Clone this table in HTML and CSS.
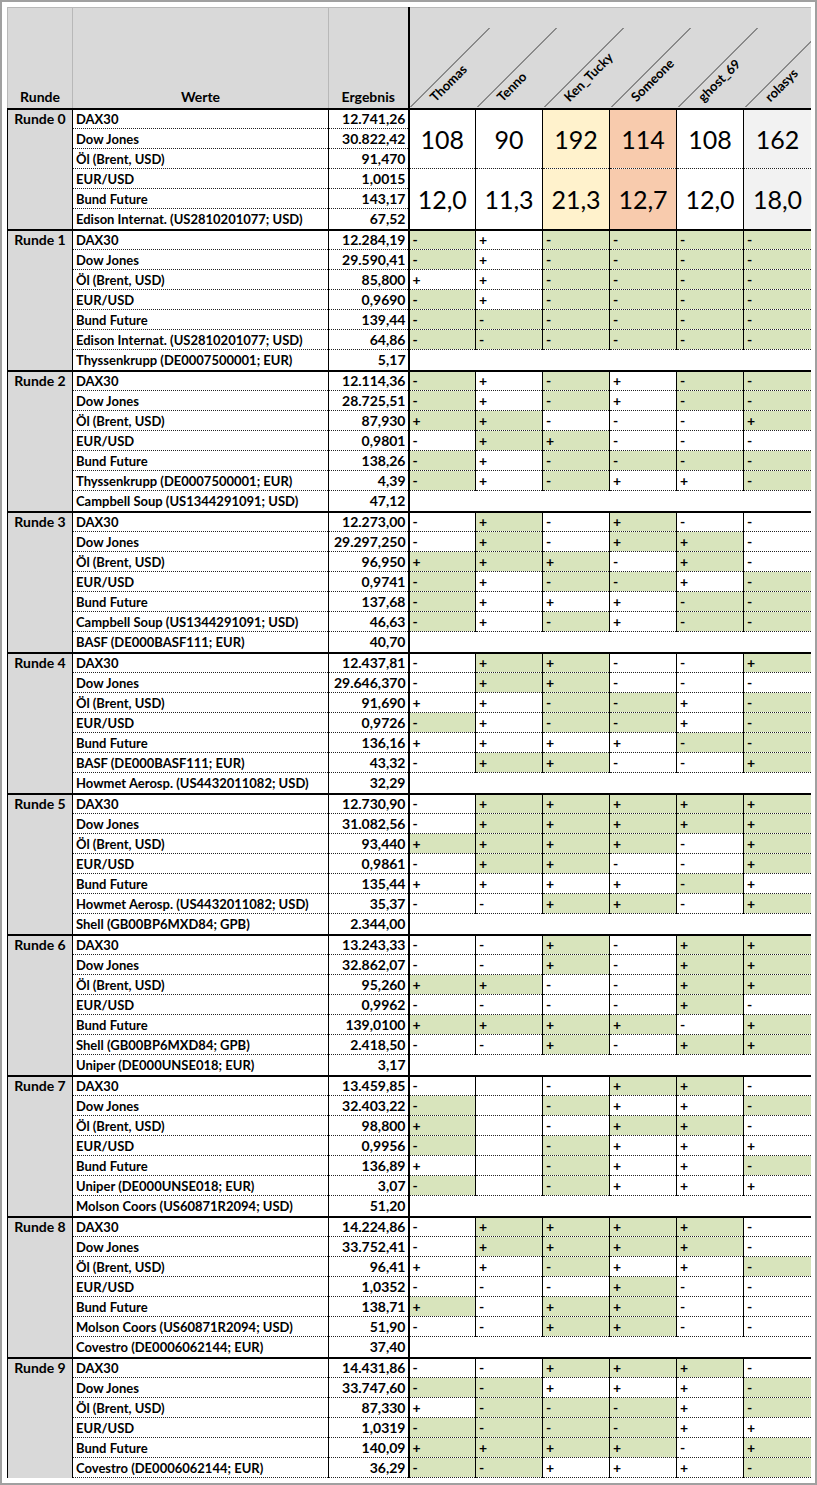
FILE: index.html
```html
<!DOCTYPE html>
<html lang="de">
<head>
<meta charset="utf-8">
<title>Börsenspiel</title>
<link rel="stylesheet" href="styles.css">
</head>
<body>
<div class="frame">
<div class="clip">
<table class="sheet">
<colgroup>
<col class="c-runde"><col class="c-werte"><col class="c-erg">
<col class="c-p"><col class="c-p"><col class="c-p"><col class="c-p"><col class="c-p"><col class="c-plast">
</colgroup>
<tr class="head">
<th class="h1">Runde</th><th class="h2">Werte</th><th class="h3">Ergebnis</th>
<th class="hp" colspan="6"><div class="names">
<svg class="diag" width="402" height="99" viewBox="0 0 402 99">
<path d="M0.5 99 L79.5 20 M67.5 99 L146.5 20 M134.5 99 L213.5 20 M201.5 99 L280.5 20 M268.5 99 L347.5 20 M335.5 99 L414.5 20" stroke="#3a3a3a" stroke-width="1" fill="none"/>
</svg>
<span class="nm n1">Thomas</span><span class="nm n2">Tenno</span><span class="nm n3">Ken_Tucky</span><span class="nm n4">Someone</span><span class="nm n5">ghost_69</span><span class="nm n6">rolasys</span>
</div></th>
</tr>

<tr><td class="r" rowspan="6">Runde 0</td><td class="w">DAX30</td><td class="e">12.741,26</td><td class="big" rowspan="3">108</td><td class="big" rowspan="3">90</td><td class="big y" rowspan="3">192</td><td class="big o" rowspan="3">114</td><td class="big" rowspan="3">108</td><td class="big l" rowspan="3">162</td></tr>
<tr><td class="w">Dow Jones</td><td class="e">30.822,42</td></tr>
<tr><td class="w">Öl (Brent, USD)</td><td class="e">91,470</td></tr>
<tr><td class="w">EUR/USD</td><td class="e">1,0015</td><td class="big bb" rowspan="3">12,0</td><td class="big bb" rowspan="3">11,3</td><td class="big bb y" rowspan="3">21,3</td><td class="big bb o" rowspan="3">12,7</td><td class="big bb" rowspan="3">12,0</td><td class="big bb l" rowspan="3">18,0</td></tr>
<tr><td class="w">Bund Future</td><td class="e">143,17</td></tr>
<tr class="end"><td class="w">Edison Internat. (US2810201077; USD)</td><td class="e">67,52</td></tr>

<tr><td class="r" rowspan="7">Runde 1</td><td class="w">DAX30</td><td class="e">12.284,19</td><td class="g">-</td><td>+</td><td class="g">-</td><td class="g">-</td><td class="g">-</td><td class="g">-</td></tr>
<tr><td class="w">Dow Jones</td><td class="e">29.590,41</td><td class="g">-</td><td>+</td><td class="g">-</td><td class="g">-</td><td class="g">-</td><td class="g">-</td></tr>
<tr><td class="w">Öl (Brent, USD)</td><td class="e">85,800</td><td>+</td><td>+</td><td class="g">-</td><td class="g">-</td><td class="g">-</td><td class="g">-</td></tr>
<tr><td class="w">EUR/USD</td><td class="e">0,9690</td><td class="g">-</td><td>+</td><td class="g">-</td><td class="g">-</td><td class="g">-</td><td class="g">-</td></tr>
<tr><td class="w">Bund Future</td><td class="e">139,44</td><td class="g">-</td><td class="g">-</td><td class="g">-</td><td class="g">-</td><td class="g">-</td><td class="g">-</td></tr>
<tr><td class="w">Edison Internat. (US2810201077; USD)</td><td class="e">64,86</td><td class="g">-</td><td class="g">-</td><td class="g">-</td><td class="g">-</td><td class="g">-</td><td class="g">-</td></tr>
<tr class="end"><td class="w">Thyssenkrupp (DE0007500001; EUR)</td><td class="e">5,17</td><td class="x" colspan="6"></td></tr>

<tr><td class="r" rowspan="7">Runde 2</td><td class="w">DAX30</td><td class="e">12.114,36</td><td class="g">-</td><td>+</td><td class="g">-</td><td>+</td><td class="g">-</td><td class="g">-</td></tr>
<tr><td class="w">Dow Jones</td><td class="e">28.725,51</td><td class="g">-</td><td>+</td><td class="g">-</td><td>+</td><td class="g">-</td><td class="g">-</td></tr>
<tr><td class="w">Öl (Brent, USD)</td><td class="e">87,930</td><td class="g">+</td><td class="g">+</td><td>-</td><td>-</td><td>-</td><td class="g">+</td></tr>
<tr><td class="w">EUR/USD</td><td class="e">0,9801</td><td>-</td><td class="g">+</td><td class="g">+</td><td>-</td><td>-</td><td>-</td></tr>
<tr><td class="w">Bund Future</td><td class="e">138,26</td><td class="g">-</td><td>+</td><td class="g">-</td><td class="g">-</td><td class="g">-</td><td class="g">-</td></tr>
<tr><td class="w">Thyssenkrupp (DE0007500001; EUR)</td><td class="e">4,39</td><td class="g">-</td><td>+</td><td class="g">-</td><td>+</td><td>+</td><td class="g">-</td></tr>
<tr class="end"><td class="w">Campbell Soup (US1344291091; USD)</td><td class="e">47,12</td><td class="x" colspan="6"></td></tr>

<tr><td class="r" rowspan="7">Runde 3</td><td class="w">DAX30</td><td class="e">12.273,00</td><td>-</td><td class="g">+</td><td>-</td><td class="g">+</td><td>-</td><td>-</td></tr>
<tr><td class="w">Dow Jones</td><td class="e">29.297,250</td><td>-</td><td class="g">+</td><td>-</td><td class="g">+</td><td class="g">+</td><td>-</td></tr>
<tr><td class="w">Öl (Brent, USD)</td><td class="e">96,950</td><td class="g">+</td><td class="g">+</td><td class="g">+</td><td>-</td><td class="g">+</td><td>-</td></tr>
<tr><td class="w">EUR/USD</td><td class="e">0,9741</td><td class="g">-</td><td>+</td><td class="g">-</td><td class="g">-</td><td>+</td><td class="g">-</td></tr>
<tr><td class="w">Bund Future</td><td class="e">137,68</td><td class="g">-</td><td>+</td><td>+</td><td>+</td><td class="g">-</td><td class="g">-</td></tr>
<tr><td class="w">Campbell Soup (US1344291091; USD)</td><td class="e">46,63</td><td class="g">-</td><td>+</td><td class="g">-</td><td>+</td><td class="g">-</td><td class="g">-</td></tr>
<tr class="end"><td class="w">BASF (DE000BASF111; EUR)</td><td class="e">40,70</td><td class="x" colspan="6"></td></tr>

<tr><td class="r" rowspan="7">Runde 4</td><td class="w">DAX30</td><td class="e">12.437,81</td><td>-</td><td class="g">+</td><td class="g">+</td><td>-</td><td>-</td><td class="g">+</td></tr>
<tr><td class="w">Dow Jones</td><td class="e">29.646,370</td><td>-</td><td class="g">+</td><td class="g">+</td><td>-</td><td>-</td><td>-</td></tr>
<tr><td class="w">Öl (Brent, USD)</td><td class="e">91,690</td><td>+</td><td>+</td><td class="g">-</td><td class="g">-</td><td>+</td><td class="g">-</td></tr>
<tr><td class="w">EUR/USD</td><td class="e">0,9726</td><td class="g">-</td><td>+</td><td class="g">-</td><td class="g">-</td><td>+</td><td class="g">-</td></tr>
<tr><td class="w">Bund Future</td><td class="e">136,16</td><td>+</td><td>+</td><td>+</td><td>+</td><td class="g">-</td><td class="g">-</td></tr>
<tr><td class="w">BASF (DE000BASF111; EUR)</td><td class="e">43,32</td><td>-</td><td class="g">+</td><td class="g">+</td><td>-</td><td>-</td><td class="g">+</td></tr>
<tr class="end"><td class="w">Howmet Aerosp. (US4432011082; USD)</td><td class="e">32,29</td><td class="x" colspan="6"></td></tr>

<tr><td class="r" rowspan="7">Runde 5</td><td class="w">DAX30</td><td class="e">12.730,90</td><td>-</td><td class="g">+</td><td class="g">+</td><td class="g">+</td><td class="g">+</td><td class="g">+</td></tr>
<tr><td class="w">Dow Jones</td><td class="e">31.082,56</td><td>-</td><td class="g">+</td><td class="g">+</td><td class="g">+</td><td class="g">+</td><td class="g">+</td></tr>
<tr><td class="w">Öl (Brent, USD)</td><td class="e">93,440</td><td class="g">+</td><td class="g">+</td><td class="g">+</td><td class="g">+</td><td>-</td><td class="g">+</td></tr>
<tr><td class="w">EUR/USD</td><td class="e">0,9861</td><td>-</td><td class="g">+</td><td class="g">+</td><td>-</td><td>-</td><td class="g">+</td></tr>
<tr><td class="w">Bund Future</td><td class="e">135,44</td><td>+</td><td>+</td><td>+</td><td>+</td><td class="g">-</td><td>+</td></tr>
<tr><td class="w">Howmet Aerosp. (US4432011082; USD)</td><td class="e">35,37</td><td>-</td><td>-</td><td class="g">+</td><td class="g">+</td><td>-</td><td class="g">+</td></tr>
<tr class="end"><td class="w">Shell (GB00BP6MXD84; GPB)</td><td class="e">2.344,00</td><td class="x" colspan="6"></td></tr>

<tr><td class="r" rowspan="7">Runde 6</td><td class="w">DAX30</td><td class="e">13.243,33</td><td>-</td><td>-</td><td class="g">+</td><td>-</td><td class="g">+</td><td class="g">+</td></tr>
<tr><td class="w">Dow Jones</td><td class="e">32.862,07</td><td>-</td><td>-</td><td class="g">+</td><td>-</td><td class="g">+</td><td class="g">+</td></tr>
<tr><td class="w">Öl (Brent, USD)</td><td class="e">95,260</td><td class="g">+</td><td class="g">+</td><td>-</td><td>-</td><td class="g">+</td><td class="g">+</td></tr>
<tr><td class="w">EUR/USD</td><td class="e">0,9962</td><td>-</td><td>-</td><td>-</td><td>-</td><td class="g">+</td><td>-</td></tr>
<tr><td class="w">Bund Future</td><td class="e">139,0100</td><td class="g">+</td><td class="g">+</td><td class="g">+</td><td class="g">+</td><td>-</td><td class="g">+</td></tr>
<tr><td class="w">Shell (GB00BP6MXD84; GPB)</td><td class="e">2.418,50</td><td>-</td><td>-</td><td class="g">+</td><td>-</td><td class="g">+</td><td class="g">+</td></tr>
<tr class="end"><td class="w">Uniper (DE000UNSE018; EUR)</td><td class="e">3,17</td><td class="x" colspan="6"></td></tr>

<tr><td class="r" rowspan="7">Runde 7</td><td class="w">DAX30</td><td class="e">13.459,85</td><td>-</td><td></td><td>-</td><td class="g">+</td><td class="g">+</td><td>-</td></tr>
<tr><td class="w">Dow Jones</td><td class="e">32.403,22</td><td class="g">-</td><td></td><td class="g">-</td><td>+</td><td>+</td><td class="g">-</td></tr>
<tr><td class="w">Öl (Brent, USD)</td><td class="e">98,800</td><td class="g">+</td><td></td><td>-</td><td class="g">+</td><td class="g">+</td><td>-</td></tr>
<tr><td class="w">EUR/USD</td><td class="e">0,9956</td><td class="g">-</td><td></td><td class="g">-</td><td>+</td><td>+</td><td>+</td></tr>
<tr><td class="w">Bund Future</td><td class="e">136,89</td><td>+</td><td></td><td class="g">-</td><td>+</td><td>+</td><td class="g">-</td></tr>
<tr><td class="w">Uniper (DE000UNSE018; EUR)</td><td class="e">3,07</td><td class="g">-</td><td></td><td class="g">-</td><td>+</td><td>+</td><td>+</td></tr>
<tr class="end"><td class="w">Molson Coors (US60871R2094; USD)</td><td class="e">51,20</td><td class="x" colspan="6"></td></tr>

<tr><td class="r" rowspan="7">Runde 8</td><td class="w">DAX30</td><td class="e">14.224,86</td><td>-</td><td class="g">+</td><td class="g">+</td><td class="g">+</td><td class="g">+</td><td>-</td></tr>
<tr><td class="w">Dow Jones</td><td class="e">33.752,41</td><td>-</td><td class="g">+</td><td class="g">+</td><td class="g">+</td><td class="g">+</td><td>-</td></tr>
<tr><td class="w">Öl (Brent, USD)</td><td class="e">96,41</td><td>+</td><td>+</td><td class="g">-</td><td>+</td><td>+</td><td class="g">-</td></tr>
<tr><td class="w">EUR/USD</td><td class="e">1,0352</td><td>-</td><td>-</td><td>-</td><td class="g">+</td><td>-</td><td>-</td></tr>
<tr><td class="w">Bund Future</td><td class="e">138,71</td><td class="g">+</td><td>-</td><td class="g">+</td><td class="g">+</td><td>-</td><td>-</td></tr>
<tr><td class="w">Molson Coors (US60871R2094; USD)</td><td class="e">51,90</td><td>-</td><td>-</td><td class="g">+</td><td class="g">+</td><td>-</td><td>-</td></tr>
<tr class="end"><td class="w">Covestro (DE0006062144; EUR)</td><td class="e">37,40</td><td class="x" colspan="6"></td></tr>

<tr><td class="r open" rowspan="6">Runde 9</td><td class="w">DAX30</td><td class="e">14.431,86</td><td>-</td><td>-</td><td class="g">+</td><td class="g">+</td><td class="g">+</td><td>-</td></tr>
<tr><td class="w">Dow Jones</td><td class="e">33.747,60</td><td class="g">-</td><td class="g">-</td><td>+</td><td>+</td><td>+</td><td class="g">-</td></tr>
<tr><td class="w">Öl (Brent, USD)</td><td class="e">87,330</td><td>+</td><td class="g">-</td><td class="g">-</td><td class="g">-</td><td>+</td><td class="g">-</td></tr>
<tr><td class="w">EUR/USD</td><td class="e">1,0319</td><td class="g">-</td><td class="g">-</td><td class="g">-</td><td class="g">-</td><td>+</td><td>+</td></tr>
<tr><td class="w">Bund Future</td><td class="e">140,09</td><td class="g">+</td><td class="g">+</td><td class="g">+</td><td class="g">+</td><td>-</td><td class="g">+</td></tr>
<tr><td class="w">Covestro (DE0006062144; EUR)</td><td class="e">36,29</td><td class="g">-</td><td class="g">-</td><td>+</td><td>+</td><td>+</td><td class="g">-</td></tr>
</table>
</div>
</div>
</body>
</html>
```

FILE: styles.css
```css
* { box-sizing: border-box; }
html, body { margin: 0; padding: 0; background: #ffffff; }

.frame {
  width: 817px;
  height: 1485px;
  border: 2px solid #a0a0a0;
  padding: 5px 4px 5px 5px;
  background: #ffffff;
}
.clip { height: 100%; overflow: hidden; }

.sheet {
  border-collapse: collapse;
  table-layout: fixed;
  width: 804px;
  font-family: Lato, "Open Sans", "Liberation Sans", sans-serif;
  font-weight: 700;
  font-size: 14px;
  color: #000;
  border-left: 1px solid #000;
  border-right: 1px solid #000;
}
.c-runde { width: 65px; }
.c-werte { width: 256px; }
.c-erg { width: 80px; }
.c-p { width: 67px; }
.c-plast { width: 68px; }

.sheet td {
  padding: 0 0 0 3px;
  height: 20px;
  line-height: 18px;
  white-space: nowrap;
  overflow: hidden;
  vertical-align: middle;
  border-left: 1px solid #000;
  border-right: 1px solid #000;
  border-bottom: 1px dotted #222;
  background: #ffffff;
}

/* header */
.head th {
  height: 101px;
  padding: 0 0 2px 0;
  background: #d9d9d9;
  border: 1px solid #b8b8b8;
  border-bottom: 2px solid #000;
  vertical-align: bottom;
  text-align: center;
  line-height: 18px;
  font-weight: 700;
}
.head th.h3 { border-right: 2px solid #000; }
.head th.hp { padding: 0; vertical-align: top; }
.names { position: relative; height: 99px; overflow: hidden; }
.diag { position: absolute; left: 0; top: 0; display: block; }
.nm {
  position: absolute;
  bottom: 3px;
  font-size: 13px;
  line-height: 13px;
  white-space: nowrap;
  transform-origin: 0 100%;
  transform: rotate(-45deg);
}
.n1 { left: 27px; }
.n2 { left: 94px; }
.n3 { left: 161px; }
.n4 { left: 228px; }
.n5 { left: 295px; }
.n6 { left: 362px; }

/* data */
.sheet td.r {
  background: #d9d9d9;
  text-align: center;
  vertical-align: top;
  padding: 0;
  border-bottom: 2px solid #000;
}
.sheet td.r.open { border-bottom: 0 none; }
.sheet td.w { padding-left: 3px; font-size: 13px; }
.sheet td.e {
  text-align: right;
  padding: 0 2px 0 0;
  border-right: 2px solid #000;
}
.sheet tr.end td { border-bottom: 2px solid #000; height: 21px; }
.sheet td.x { border-left: 0 none; border-right: 0 none; }
.sheet td.g { background: #d8e4bc; }

.sheet td.big {
  font-size: 25px;
  font-weight: 400;
  text-align: center;
  padding: 0;
}
.sheet td.bb { border-bottom: 2px solid #000; }
.sheet td.y { background: #fff2cc; }
.sheet td.o { background: #f8cbad; }
.sheet td.l { background: #f2f2f2; }
```
